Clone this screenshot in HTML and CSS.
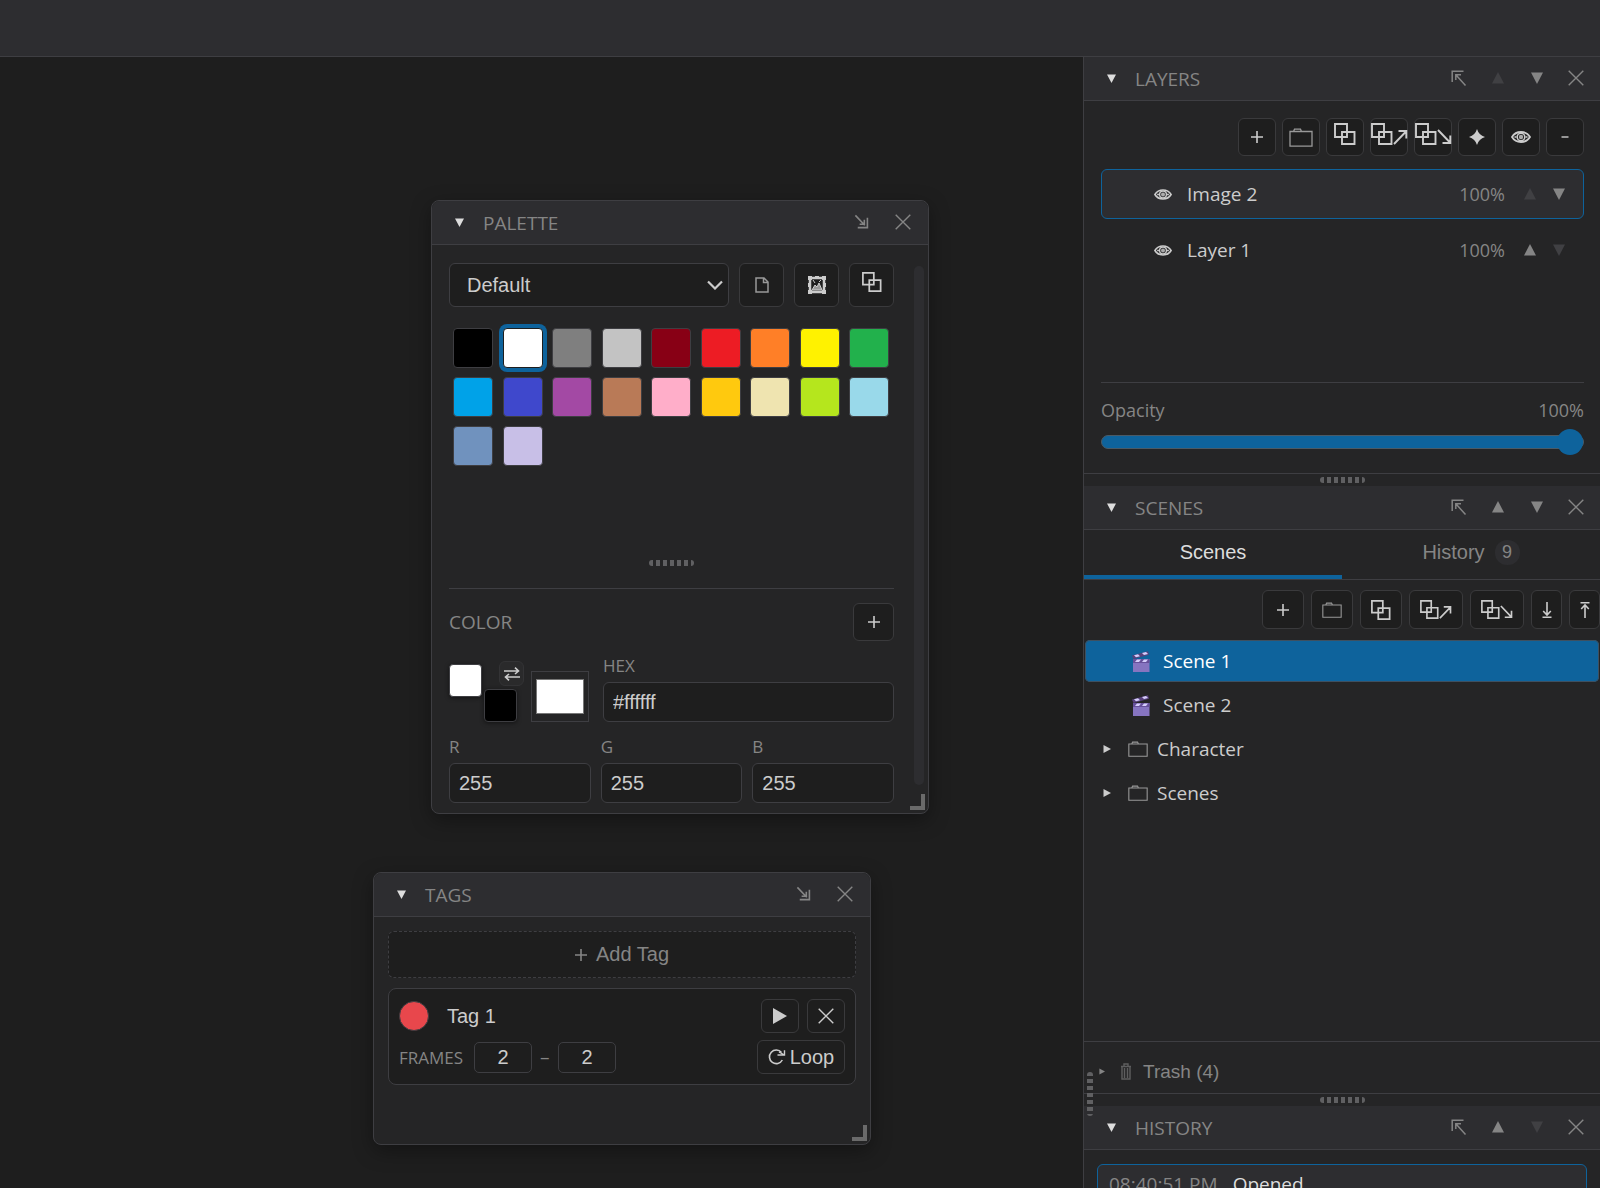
FILE: index.html
```html
<!DOCTYPE html>
<html lang="en">
<head>
    <meta charset="UTF-8">
    <meta name="viewport" content="width=device-width, initial-scale=1.0">
    <title>Editor</title>
    <link rel="stylesheet" href="styles.css">
</head>
<body>

    <!-- Shared icons -->
    <svg class="icon-defs" aria-hidden="true">
        <symbol id="i-close" viewBox="0 0 16 16"><path d="M.7.7l14.6 14.6M15.3.7L.7 15.3" fill="none" stroke="currentColor" stroke-width="1.4"/></symbol>
        <symbol id="i-down" viewBox="0 0 12 12"><path d="M0 .5h12L6 12z" fill="currentColor"/></symbol>
        <symbol id="i-up" viewBox="0 0 12 12"><path d="M0 11.5h12L6 0z" fill="currentColor"/></symbol>
        <symbol id="i-right" viewBox="0 0 8 8"><path d="M.5 0v8L8 4z" fill="currentColor"/></symbol>
        <symbol id="i-undock" viewBox="0 0 16 16"><path d="M1.2 12V1.2H12.500M4.8 10V4.8H10M4.8 4.8L14.5 15.500" fill="none" stroke="currentColor" stroke-width="1.5"/></symbol>
        <symbol id="i-dock" viewBox="0 0 16 16"><path d="M14.3 4v10.5H4M11 6v5H6M1.5 1.5L11.5 12" fill="none" stroke="currentColor" stroke-width="1.7"/></symbol>
        <symbol id="i-plus" viewBox="0 0 12 12"><path d="M6 0v12M0 6h12" fill="none" stroke="currentColor" stroke-width="1.6"/></symbol>
        <symbol id="i-minus" viewBox="0 0 12 12"><path d="M2.5 6h7" fill="none" stroke="currentColor" stroke-width="1.4"/></symbol>
        <symbol id="i-folder" viewBox="0 0 24 19"><path d="M1 3.5h22v14.7H1zM4.5 3.5l1-2.3h6l1 2.3" fill="none" stroke="currentColor" stroke-width="1.3"/></symbol>
        <symbol id="i-copy" viewBox="0 0 22 22"><path d="M1 1h12v13H1zM8 9h12.5v12H8z" fill="none" stroke="currentColor" stroke-width="1.9"/></symbol>
        <symbol id="i-copy-up" viewBox="0 0 37 22"><path d="M1 1h12v13H1zM8 9h12.5v12H8zM23 21L35 8.5M27.5 8H35.3V15.5" fill="none" stroke="currentColor" stroke-width="1.9"/></symbol>
        <symbol id="i-copy-down" viewBox="0 0 37 22"><path d="M1 1h12v13H1zM8 9h12.5v12H8zM23 7L35 19.5M27.5 20H35.3V12.5" fill="none" stroke="currentColor" stroke-width="1.9"/></symbol>
        <symbol id="i-star" viewBox="0 0 16 16"><path d="M8 0Q9.8 6.2 16 8Q9.8 9.8 8 16Q6.2 9.8 0 8Q6.2 6.2 8 0z" fill="currentColor"/></symbol>
        <symbol id="i-eye" viewBox="0 0 20 12"><path d="M1 6Q4 1 10 1T19 6Q16 11 10 11T1 6z" fill="none" stroke="currentColor" stroke-width="1.8"/><circle cx="10" cy="6" r="3.8" fill="none" stroke="currentColor" stroke-width="1.5"/><circle cx="10" cy="6" r="2.2" fill="currentColor" fill-opacity=".8"/><path d="M3.5 6h2M14.5 6h2" stroke="currentColor" stroke-width="1.5"/></symbol>
        <symbol id="i-import" viewBox="0 0 10 16"><path d="M5 0v12.5M1.2 9L5 13l3.8-4M.5 15.2h9" fill="none" stroke="currentColor" stroke-width="1.6"/></symbol>
        <symbol id="i-export" viewBox="0 0 10 16"><path d="M5 16V3M1.2 7L5 3l3.8 4M.5.8h9" fill="none" stroke="currentColor" stroke-width="1.6"/></symbol>
        <symbol id="i-page" viewBox="0 0 14 16"><path d="M1 1h8l4 4v10H1zM8.5 1v4.5H13" fill="none" stroke="currentColor" stroke-width="1.5"/></symbol>
        <symbol id="i-picture" viewBox="0 0 18 18"><path d="M2 2h14v14H2z" fill="none" stroke="currentColor" stroke-width="2.5"/><path d="M0 0h4v4H0zM14 0h4v4h-4zM0 14h4v4H0zM14 14h4v4h-4zM7 0h4v3H7zM0 7h3v4H0zM15 7h3v4h-3z" fill="currentColor"/><path d="M4 14l3-5 2 2 2-4 3 7zM5 4l2 3M13 4l-2 2" fill="currentColor" fill-opacity=".7" stroke="currentColor"/></symbol>
        <symbol id="i-swap" viewBox="0 0 16 14"><path d="M0 4h14M11 .7L14.5 4 11 7M16 10H2M5 7L1.5 10 5 13.3" fill="none" stroke="currentColor" stroke-width="1.6"/></symbol>
        <symbol id="i-play" viewBox="0 0 14 16"><path d="M0 0v16l14-8z" fill="currentColor"/></symbol>
        <symbol id="i-loop" viewBox="0 0 18 17"><path d="M14.300 11.5A6.8 6.8 0 1 1 13.5 4" fill="none" stroke="currentColor" stroke-width="1.6"/><path d="M9.5 6.5h7V1.8M16.5 6.5L11 3.5" fill="none" stroke="currentColor" stroke-width="1.4"/></symbol>
        <symbol id="i-trash" viewBox="0 0 12 17"><path d="M1 3.5h10M2 4v12h8V4M4 3V1h4v2M4.5 5v10M7.5 5v10" fill="none" stroke="currentColor" stroke-width="1.4"/></symbol>
        <symbol id="i-scene" viewBox="0 0 18 21"><path d="M1 8h16.5v13H1z" fill="#8674c0"/><path d="M1 8h16.5v4H1z" fill="#66509a"/><path d="M0 4.5L16 .3l1 3.5L1.5 8z" fill="#57417c"/><path d="M2 4.3l4-1 2 2-4 1zM10 2l4-1 2 2-4 1zM5 8.5h4l-2 2.5H3zM12 8.5h4L14 11h-4z" fill="#d5cdfb"/></symbol>
    </svg>

    <div class="app">
        <header class="topbar"></header>

        <div class="workspace">
            <main class="canvas">

                <section class="window palette">
                    <div class="panel-head">
                        <button class="icon-btn collapse" aria-label="Collapse"><svg class="s10"><use href="#i-down"/></svg></button>
                        <h2>PALETTE</h2>
                        <button class="icon-btn" aria-label="Dock"><svg class="s14"><use href="#i-dock"/></svg></button>
                        <button class="icon-btn" aria-label="Close"><svg class="s16"><use href="#i-close"/></svg></button>
                    </div>
                    <div class="palette-body">
                        <div class="palette-picker">
                            <div class="select-wrap">
                                <select aria-label="Palette">
                                    <option>Default</option>
                                </select>
                                <svg class="chevron" viewBox="0 0 16 10"><path d="M1 1.5l7 7 7-7" fill="none" stroke="currentColor" stroke-width="2.2"/></svg>
                            </div>
                            <button class="btn square" aria-label="New palette"><svg class="page"><use href="#i-page"/></svg></button>
                            <button class="btn square" aria-label="From image"><svg class="s18"><use href="#i-picture"/></svg></button>
                            <button class="btn square" aria-label="Duplicate palette"><svg class="s20 raised"><use href="#i-copy"/></svg></button>
                        </div>
                        <div class="swatches" id="swatches"></div>
                        <div class="grip"></div>
                        <div class="color-head">
                            <h3>COLOR</h3>
                            <button class="btn" aria-label="Add color"><svg class="s12"><use href="#i-plus"/></svg></button>
                        </div>
                        <div class="color-row">
                            <div class="fg-bg">
                                <button class="chip fg" aria-label="Foreground"></button>
                                <button class="swap" aria-label="Swap colors"><svg class="s16"><use href="#i-swap"/></svg></button>
                                <button class="chip bg" aria-label="Background"></button>
                            </div>
                            <input type="color" value="#ffffff" aria-label="Pick color">
                            <div class="field hex">
                                <label for="hex">HEX</label>
                                <input type="text" id="hex" value="#ffffff">
                            </div>
                        </div>
                        <div class="rgb-row">
                            <div class="field">
                                <label for="red">R</label>
                                <input type="text" id="red" value="255">
                            </div>
                            <div class="field">
                                <label for="green">G</label>
                                <input type="text" id="green" value="255">
                            </div>
                            <div class="field">
                                <label for="blue">B</label>
                                <input type="text" id="blue" value="255">
                            </div>
                        </div>
                    </div>
                    <div class="scrollbar"></div>
                    <div class="resize"></div>
                </section>

                <section class="window tags">
                    <div class="panel-head">
                        <button class="icon-btn collapse" aria-label="Collapse"><svg class="s10"><use href="#i-down"/></svg></button>
                        <h2>TAGS</h2>
                        <button class="icon-btn" aria-label="Dock"><svg class="s14"><use href="#i-dock"/></svg></button>
                        <button class="icon-btn" aria-label="Close"><svg class="s16"><use href="#i-close"/></svg></button>
                    </div>
                    <div class="tags-body">
                        <button class="add-tag"><svg class="s12"><use href="#i-plus"/></svg>Add Tag</button>
                        <div class="tag-card">
                            <div class="tag-row">
                                <button class="tag-color" aria-label="Tag color"></button>
                                <span class="tag-name">Tag 1</span>
                                <button class="btn" aria-label="Play"><svg class="play"><use href="#i-play"/></svg></button>
                                <button class="btn" aria-label="Delete tag"><svg class="s16"><use href="#i-close"/></svg></button>
                            </div>
                            <div class="tag-row frames">
                                <label for="frameFrom">FRAMES</label>
                                <input type="text" id="frameFrom" value="2">
                                <span class="dash">–</span>
                                <input type="text" id="frameTo" value="2" aria-label="Last frame">
                                <button class="btn loop"><svg class="s18"><use href="#i-loop"/></svg>Loop</button>
                            </div>
                        </div>
                    </div>
                    <div class="resize"></div>
                </section>
            </main>

            <aside class="sidebar">
                <div class="side-grip"></div>

                <section class="panel layers">
                    <div class="panel-head">
                        <button class="icon-btn collapse" aria-label="Collapse"><svg class="s10"><use href="#i-down"/></svg></button>
                        <h2>LAYERS</h2>
                        <button class="icon-btn" aria-label="Undock"><svg class="s16"><use href="#i-undock"/></svg></button>
                        <button class="icon-btn" aria-label="Move up" disabled><svg class="s12"><use href="#i-up"/></svg></button>
                        <button class="icon-btn" aria-label="Move down"><svg class="s12"><use href="#i-down"/></svg></button>
                        <button class="icon-btn" aria-label="Close"><svg class="s16"><use href="#i-close"/></svg></button>
                    </div>
                    <div class="layers-body">
                        <div class="layer-tools">
                            <button class="btn" aria-label="Add layer"><svg class="s12"><use href="#i-plus"/></svg></button>
                            <button class="btn" aria-label="Add folder"><svg class="folder-lg"><use href="#i-folder"/></svg></button>
                            <button class="btn" aria-label="Duplicate"><svg class="copy raised"><use href="#i-copy"/></svg></button>
                            <button class="btn" aria-label="Duplicate above"><svg class="copy-to raised"><use href="#i-copy-up"/></svg></button>
                            <button class="btn" aria-label="Duplicate below"><svg class="copy-to raised"><use href="#i-copy-down"/></svg></button>
                            <button class="btn" aria-label="Effects"><svg class="s16"><use href="#i-star"/></svg></button>
                            <button class="btn" aria-label="Toggle visibility"><svg class="eye"><use href="#i-eye"/></svg></button>
                            <button class="btn" aria-label="Remove layer"><svg class="s12"><use href="#i-minus"/></svg></button>
                        </div>
                        <ul class="layer-list">
                            <li class="layer active">
                                <button class="icon-btn light" aria-label="Hide layer"><svg class="eye-sm"><use href="#i-eye"/></svg></button>
                                <span class="layer-name">Image 2</span>
                                <span class="percent">100%</span>
                                <button class="icon-btn" aria-label="Move up" disabled><svg class="s12"><use href="#i-up"/></svg></button>
                                <button class="icon-btn" aria-label="Move down"><svg class="s12"><use href="#i-down"/></svg></button>
                            </li>
                            <li class="layer">
                                <button class="icon-btn light" aria-label="Hide layer"><svg class="eye-sm"><use href="#i-eye"/></svg></button>
                                <span class="layer-name">Layer 1</span>
                                <span class="percent">100%</span>
                                <button class="icon-btn" aria-label="Move up"><svg class="s12"><use href="#i-up"/></svg></button>
                                <button class="icon-btn" aria-label="Move down" disabled><svg class="s12"><use href="#i-down"/></svg></button>
                            </li>
                        </ul>
                        <div class="opacity">
                            <div class="opacity-label">
                                <label for="opacity">Opacity</label>
                                <output for="opacity">100%</output>
                            </div>
                            <input type="range" id="opacity" min="0" max="100" value="100">
                        </div>
                    </div>
                </section>

                <div class="splitter"></div>

                <section class="panel scenes">
                    <div class="panel-head">
                        <button class="icon-btn collapse" aria-label="Collapse"><svg class="s10"><use href="#i-down"/></svg></button>
                        <h2>SCENES</h2>
                        <button class="icon-btn" aria-label="Undock"><svg class="s16"><use href="#i-undock"/></svg></button>
                        <button class="icon-btn" aria-label="Move up"><svg class="s12"><use href="#i-up"/></svg></button>
                        <button class="icon-btn" aria-label="Move down"><svg class="s12"><use href="#i-down"/></svg></button>
                        <button class="icon-btn" aria-label="Close"><svg class="s16"><use href="#i-close"/></svg></button>
                    </div>
                    <div class="tabs">
                        <button class="tab active">Scenes</button>
                        <button class="tab">History <span class="count">9</span></button>
                    </div>
                    <div class="scene-tools">
                        <button class="btn" aria-label="Add scene"><svg class="s12"><use href="#i-plus"/></svg></button>
                        <button class="btn" aria-label="Add folder"><svg class="folder"><use href="#i-folder"/></svg></button>
                        <button class="btn" aria-label="Duplicate"><svg class="s20"><use href="#i-copy"/></svg></button>
                        <button class="btn wide" aria-label="Duplicate above"><svg class="copy-to-sm"><use href="#i-copy-up"/></svg></button>
                        <button class="btn wide" aria-label="Duplicate below"><svg class="copy-to-sm"><use href="#i-copy-down"/></svg></button>
                        <button class="btn narrow" aria-label="Import"><svg class="arrow"><use href="#i-import"/></svg></button>
                        <button class="btn narrow" aria-label="Export"><svg class="arrow"><use href="#i-export"/></svg></button>
                    </div>
                    <ul class="scene-list">
                        <li class="scene active"><svg class="clapper"><use href="#i-scene"/></svg>Scene 1</li>
                        <li class="scene"><svg class="clapper"><use href="#i-scene"/></svg>Scene 2</li>
                        <li class="scene group"><svg class="s8"><use href="#i-right"/></svg><svg class="folder"><use href="#i-folder"/></svg>Character</li>
                        <li class="scene group"><svg class="s8"><use href="#i-right"/></svg><svg class="folder"><use href="#i-folder"/></svg>Scenes</li>
                    </ul>
                    <button class="trash"><svg class="s6"><use href="#i-right"/></svg><svg class="bin"><use href="#i-trash"/></svg>Trash (4)</button>
                </section>

                <div class="splitter"></div>

                <section class="panel history">
                    <div class="panel-head">
                        <button class="icon-btn collapse" aria-label="Collapse"><svg class="s10"><use href="#i-down"/></svg></button>
                        <h2>HISTORY</h2>
                        <button class="icon-btn" aria-label="Undock"><svg class="s16"><use href="#i-undock"/></svg></button>
                        <button class="icon-btn" aria-label="Move up"><svg class="s12"><use href="#i-up"/></svg></button>
                        <button class="icon-btn" aria-label="Move down" disabled><svg class="s12"><use href="#i-down"/></svg></button>
                        <button class="icon-btn" aria-label="Close"><svg class="s16"><use href="#i-close"/></svg></button>
                    </div>
                    <ul class="history-list">
                        <li class="entry"><time>08:40:51 PM</time>Opened</li>
                    </ul>
                </section>
            </aside>
        </div>
    </div>

    <script>
        const colors = [
            '#000000', '#ffffff', '#7f7f7f', '#c3c3c3', '#880015', '#ed1c24', '#ff7f27', '#fff200', '#22b14c',
            '#00a2e8', '#3f48cc', '#a349a4', '#b97a57', '#ffaec9', '#ffc90e', '#efe4b0', '#b5e61d', '#99d9ea',
            '#7092be', '#c8bfe7'
        ];
        let selected = 1;

        // Draw the palette swatches
        function renderSwatches() {
            const box = document.getElementById('swatches');
            box.innerHTML = '';
            colors.forEach((color, index) => {
                const swatch = document.createElement('button');
                swatch.className = index === selected ? 'swatch selected' : 'swatch';
                swatch.style.backgroundColor = color;
                swatch.setAttribute('aria-label', color);
                swatch.onclick = () => {
                    selected = index;
                    renderSwatches();
                };
                box.appendChild(swatch);
            });
        }

        renderSwatches();
    </script>

</body>
</html>
```
FILE: styles.css
```css
* {
    box-sizing: border-box;
}

body {
    margin: 0;
    background-color: #1e1e1e;
    color: #cccccc;
    font-family: "Open Sans", "Noto Sans", sans-serif;
    font-size: 19px;
}

button, input, select {
    font-family: "Liberation Sans", Arial, sans-serif;
    font-size: 20px;
    color: #cccccc;
    margin: 0;
    padding: 0;
}

h2, h3 {
    margin: 0;
    font-size: 19px;
    font-weight: 400;
    color: #858585;
}

ul {
    list-style: none;
    margin: 0;
    padding: 0;
}

svg {
    display: block;
    flex: none;
}

.icon-defs {
    position: absolute;
    width: 0;
    height: 0;
}

/* Icon sizes */
.s6 { width: 6px; height: 7px; }
.s8 { width: 8px; height: 8px; }
.s10 { width: 9px; height: 9px; }
.s12 { width: 12px; height: 12px; }
.s14 { width: 15px; height: 15px; }
.s16 { width: 16px; height: 16px; }
.s18 { width: 18px; height: 18px; }
.s20 { width: 20px; height: 20px; }
.page { width: 14px; height: 16px; color: #999999; }
.play { width: 14px; height: 16px; }
.folder { width: 20px; height: 16px; color: #999999; }
.folder-lg { width: 24px; height: 19px; color: #999999; }
.copy { width: 22px; height: 22px; }
.copy-to { width: 37px; height: 22px; }
.copy-to-sm { width: 32px; height: 19px; }
.eye { width: 20px; height: 12px; }
.eye-sm { width: 18px; height: 11px; }
.arrow { width: 10px; height: 16px; }
.clapper { width: 18px; height: 21px; }
.bin { width: 12px; height: 17px; opacity: 0.6; }

/* App frame */
.app {
    display: flex;
    flex-direction: column;
    height: 100vh;
    overflow: hidden;
}

.topbar {
    flex: 0 0 57px;
    background-color: #2d2d30;
    border-bottom: 1px solid #3e3e42;
}

.workspace {
    display: flex;
    flex: 1;
    min-height: 0;
}

.canvas {
    position: relative;
    flex: 1;
    min-width: 0;
}

.sidebar {
    position: relative;
    display: flex;
    flex-direction: column;
    flex: 0 0 517px;
    background-color: #252526;
    border-left: 1px solid #3e3e42;
}

/* Buttons */
.btn {
    display: flex;
    align-items: center;
    justify-content: center;
    background-color: #1e1e1e;
    border: 1px solid #3a3a3c;
    border-radius: 6px;
    cursor: pointer;
}

.btn .raised {
    margin-bottom: 6px;
}

.icon-btn {
    display: flex;
    align-items: center;
    justify-content: center;
    width: 16px;
    height: 24px;
    background: none;
    border: none;
    color: #858585;
    cursor: pointer;
}

.icon-btn:disabled {
    color: #404043;
}

.icon-btn.light {
    width: 18px;
    color: #cccccc;
}

/* Panel header */
.panel-head {
    display: flex;
    align-items: center;
    flex: 0 0 44px;
    height: 44px;
    padding: 0 16px 0 19px;
    background-color: #2d2d30;
    border-bottom: 1px solid #3e3e42;
}

.panel-head h2 {
    flex: 1;
    padding-left: 16px;
}

.panel-head .icon-btn {
    padding-bottom: 2px;
}

.panel-head .icon-btn + .icon-btn {
    margin-left: 23px;
}

.panel-head .collapse {
    color: #dddddd;
    padding-bottom: 0;
}

/* Floating windows */
.window {
    position: absolute;
    display: flex;
    flex-direction: column;
    width: 498px;
    background-color: #252526;
    border: 1px solid #3e3e42;
    border-radius: 8px;
    box-shadow: 0 6px 20px rgba(0, 0, 0, 0.35);
}

.window .panel-head {
    padding-right: 17px;
    border-radius: 8px 8px 0 0;
}

.window .panel-head .icon-btn + .icon-btn {
    margin-left: 26px;
}

.palette {
    left: 431px;
    top: 143px;
}

.tags {
    left: 373px;
    top: 815px;
    height: 273px;
}

.resize {
    position: absolute;
    right: 3px;
    bottom: 3px;
    width: 15px;
    height: 16px;
    border-right: 4px solid #6a6a6a;
    border-bottom: 4px solid #6a6a6a;
}

.scrollbar {
    position: absolute;
    top: 65px;
    right: 4px;
    bottom: 28px;
    width: 10px;
    border-radius: 5px;
    background-color: #2d2d30;
}

/* Palette */
.palette-body {
    padding: 18px 34px 10px 17px;
}

.palette-picker {
    display: flex;
    gap: 10px;
}

.select-wrap {
    position: relative;
    flex: 1;
}

.select-wrap select {
    width: 100%;
    height: 44px;
    padding: 0 17px;
    appearance: none;
    background-color: #1e1e1e;
    border: 1px solid #3e3e42;
    border-radius: 6px;
}

.chevron {
    position: absolute;
    right: 6px;
    top: 17px;
    width: 16px;
    height: 10px;
    pointer-events: none;
}

.square {
    width: 45px;
    height: 44px;
}

.swatches {
    display: grid;
    grid-template-columns: repeat(9, 40px);
    justify-content: space-between;
    align-content: start;
    row-gap: 9px;
    min-height: 231px;
    padding: 21px 5px 0 4px;
}

.swatch {
    height: 40px;
    border: 1px solid #3e3e42;
    border-radius: 4px;
    cursor: pointer;
}

.swatch.selected {
    border-color: #1e1e1e;
    box-shadow: 0 0 0 4px #0e639c;
}

.grip, .splitter::after {
    width: 45px;
    height: 6px;
    border-radius: 3px;
    background: repeating-linear-gradient(to right, #606062 0 4px, transparent 4px 7px);
}

.grip {
    margin: 22px auto;
}

.color-head {
    display: flex;
    align-items: center;
    justify-content: space-between;
    padding-top: 14px;
    border-top: 1px solid #3e3e42;
}

.color-head .btn {
    width: 41px;
    height: 38px;
}

.color-row {
    display: flex;
    align-items: flex-end;
    padding-top: 13px;
}

.fg-bg {
    display: grid;
    grid-template-columns: 33px 33px;
    grid-template-rows: 28px 33px;
    column-gap: 2px;
    margin-right: 14px;
}

.chip {
    width: 33px;
    height: 33px;
    border: 1px solid #3e3e42;
    border-radius: 4px;
    box-shadow: 0 1px 4px rgba(0, 0, 0, 0.5);
}

.chip.fg {
    margin-top: 3px;
    background-color: #ffffff;
}

.chip.bg {
    grid-column: 2;
    background-color: #000000;
}

.swap {
    display: flex;
    align-items: center;
    justify-content: center;
    justify-self: end;
    width: 25px;
    height: 25px;
    margin-right: -7px;
    background-color: #2a2a2b;
    border: 1px solid #333335;
    border-radius: 6px;
}

input[type="color"] {
    width: 58px;
    height: 51px;
    padding: 3px 2px;
    background-color: #252526;
    border: 1px solid #3e3e42;
}

.field {
    display: flex;
    flex-direction: column;
    flex: 1;
    min-width: 0;
}

.field label {
    font-size: 17px;
    line-height: 24px;
    color: #858585;
}

.field input {
    width: 100%;
    height: 40px;
    margin-top: 4px;
    padding: 0 9px;
    background-color: #1e1e1e;
    border: 1px solid #3e3e42;
    border-radius: 6px;
}

.field.hex {
    margin-left: 14px;
}

.rgb-row {
    display: flex;
    gap: 10px;
    padding-top: 13px;
}

/* Tags */
.tags-body {
    display: flex;
    flex-direction: column;
    gap: 10px;
    padding: 14px;
}

.add-tag {
    display: flex;
    align-items: center;
    justify-content: center;
    gap: 9px;
    height: 47px;
    background-color: #1e1e1e;
    border: 1px dashed #3e3e42;
    border-radius: 6px;
    color: #858585;
}

.tag-card {
    display: flex;
    flex-direction: column;
    gap: 7px;
    padding: 10px;
    background-color: #1e1e1e;
    border: 1px solid #3e3e42;
    border-radius: 8px;
}

.tag-row {
    display: flex;
    align-items: center;
    gap: 8px;
    height: 34px;
}

.tag-row .btn {
    width: 38px;
    height: 34px;
}

.tag-color {
    width: 30px;
    height: 30px;
    border: 1px solid #3e3e42;
    border-radius: 50%;
    background-color: #e8474c;
}

.tag-name {
    flex: 1;
    padding-left: 10px;
    font-family: "Liberation Sans", Arial, sans-serif;
    font-size: 20px;
}

.frames label {
    margin-right: 3px;
    font-size: 17px;
    color: #858585;
}

.frames .dash {
    width: 10px;
    color: #858585;
}

.frames input {
    width: 58px;
    height: 31px;
    text-align: center;
    background-color: #1e1e1e;
    border: 1px solid #3e3e42;
    border-radius: 5px;
}

.frames .loop {
    width: 88px;
    margin-left: auto;
    gap: 4px;
}

/* Layers */
.layers-body {
    padding: 17px 16px 18px 17px;
}

.layer-tools {
    display: flex;
    justify-content: flex-end;
    gap: 6px;
}

.layer-tools .btn {
    width: 38px;
    height: 38px;
}

.layer-list {
    display: flex;
    flex-direction: column;
    gap: 6px;
    min-height: 226px;
    padding-top: 13px;
}

.layer {
    display: flex;
    align-items: center;
    height: 50px;
    padding: 0 16px 0 52px;
    border: 1px solid transparent;
    border-radius: 6px;
}

.layer.active {
    background-color: #2d2d30;
    border-color: #0e639c;
}

.layer-name {
    flex: 1;
    padding-left: 15px;
}

.percent {
    margin-right: 17px;
    font-size: 18px;
    color: #858585;
}

.layer .icon-btn + .icon-btn {
    margin-left: 13px;
}

.opacity {
    padding-top: 15px;
    border-top: 1px solid #3e3e42;
}

.opacity-label {
    display: flex;
    justify-content: space-between;
    font-size: 18px;
    line-height: 24px;
    color: #858585;
}

input[type="range"] {
    display: block;
    width: 100%;
    height: 26px;
    margin-top: 7px;
    appearance: none;
    background: none;
}

input[type="range"]::-webkit-slider-runnable-track {
    height: 14px;
    border-radius: 7px;
    background-color: #0e639c;
    border: 1px solid #4a5a66;
}

input[type="range"]::-webkit-slider-thumb {
    appearance: none;
    width: 26px;
    height: 26px;
    margin-top: -7px;
    border-radius: 50%;
    background-color: #0e639c;
}

.splitter {
    display: flex;
    align-items: center;
    justify-content: center;
    flex: 0 0 13px;
    border-top: 1px solid #3e3e42;
}

.splitter::after {
    content: "";
}

.side-grip {
    position: absolute;
    left: 3px;
    bottom: 72px;
    width: 6px;
    height: 44px;
    border-radius: 3px;
    background: repeating-linear-gradient(to bottom, #606062 0 4px, transparent 4px 7px);
}

/* Scenes */
.scenes {
    display: flex;
    flex-direction: column;
    flex: 1;
    min-height: 0;
}

.tabs {
    display: flex;
    height: 50px;
    border-bottom: 1px solid #3e3e42;
}

.tab {
    display: flex;
    align-items: center;
    justify-content: center;
    flex: 1;
    gap: 10px;
    background: none;
    border: none;
    border-bottom: 4px solid transparent;
    color: #858585;
    cursor: pointer;
}

.tab.active {
    color: #dddddd;
    border-bottom-color: #0e639c;
}

.count {
    width: 25px;
    border-radius: 12px;
    background-color: #2d2d30;
    font-size: 18px;
    line-height: 25px;
}

.scene-tools {
    display: flex;
    justify-content: flex-end;
    gap: 7px;
    padding: 10px 0 11px;
}

.scene-tools .btn {
    width: 42px;
    height: 39px;
}

.scene-tools .wide {
    width: 54px;
}

.scene-tools .narrow {
    width: 31px;
}

.scene-list {
    display: flex;
    flex-direction: column;
    gap: 2px;
    flex: 1;
    padding: 0 1px;
}

.scene {
    display: flex;
    align-items: center;
    gap: 13px;
    height: 42px;
    padding-left: 47px;
    border-radius: 5px;
}

.scene.active {
    background-color: #0e639c;
    color: #ffffff;
    box-shadow: inset 0 0 0 1px #3e5060;
}

.scene.group {
    gap: 9px;
    padding-left: 18px;
}

.scene.group .s8 {
    margin-right: 8px;
}

.trash {
    display: flex;
    align-items: center;
    height: 52px;
    padding: 8px 15px 0;
    gap: 11px;
    background: none;
    border: none;
    border-top: 1px solid #3e3e42;
    color: #858585;
    font-size: 19px;
    cursor: pointer;
}

.trash .s6 {
    margin-right: 4px;
}

/* History */
.history {
    flex: 0 0 82px;
    overflow: hidden;
}

.history-list {
    padding: 14px 13px;
}

.entry {
    display: flex;
    align-items: center;
    gap: 15px;
    height: 40px;
    padding: 0 11px;
    background-color: #2d2d30;
    border: 1px solid #0e639c;
    border-radius: 6px;
    color: #dddddd;
}

.entry time {
    color: #858585;
}
```
